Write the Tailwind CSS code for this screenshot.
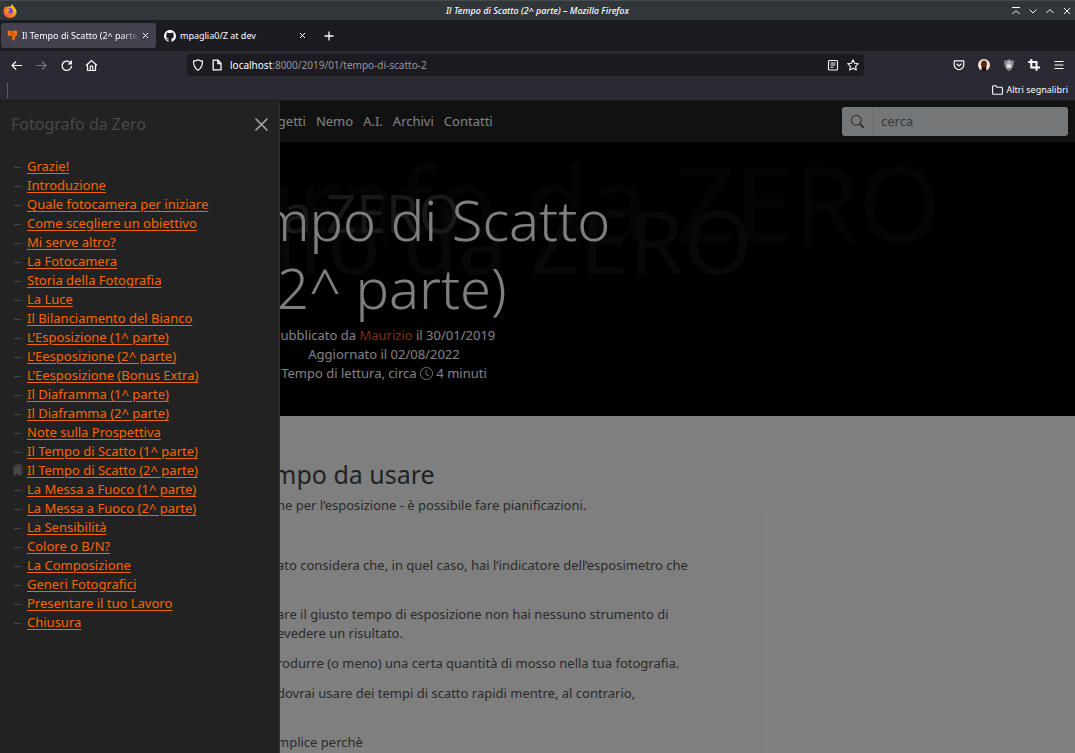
<!DOCTYPE html>
<html lang="it">
<head>
<meta charset="utf-8">
<title>Il Tempo di Scatto (2^ parte)</title>
<script src="https://cdn.jsdelivr.net/npm/@tailwindcss/browser@4"></script>
</head>
<body class="h-screen flex flex-col overflow-hidden bg-[#2b2a33] font-['Noto_Sans','Open_Sans',sans-serif] text-[13px] leading-[19px] text-[#fbfbfe]">

<!-- Window title bar -->
<header class="h-5 shrink-0 grid grid-cols-[80px_1fr_80px] items-center bg-[#30363a] border-t border-[#454a4e] text-[9px] px-[3px]">
  <svg class="size-[14px]" viewBox="0 0 16 16"><defs><linearGradient id="fx" x1="1" y1="0" x2="0" y2="1"><stop offset="0" stop-color="#fff44f"/><stop offset=".45" stop-color="#ff980e"/><stop offset="1" stop-color="#ff3750"/></linearGradient></defs><path fill="url(#fx)" d="M2.500 2.500 4 4l1-.8C6.500 2.500 8 3 8.500 3 9 2 9.500 1 10.500.3c.3 1.700 2.200 2.700 3.500 4.700 1 1.700 1.700 3 1.500 4.500C15 13.500 12 16 8 16S.5 13 .5 8.800C.5 6 1.500 4.500 2.500 2.500z"/><circle cx="8" cy="8" r="3.300" fill="#7542e5"/><path fill="#ff980e" d="M4 6c1.500-1 3-.5 4 .5 0 1-1.500 1-2 2s1 2 3 1.500c-2 2-5 1-5.500-1.500z"/></svg>
  <h1 class="text-center italic font-medium">Il Tempo di Scatto (2^ parte) – Mozilla Firefox</h1>
  <div class="flex justify-end gap-[7px]">
    <button aria-label="Sopra le altre"><svg class="size-[10px]" viewBox="0 0 10 10" fill="none" stroke="currentColor"><path d="M1 1.500h8M1.500 8 5 4.500 8.500 8"/></svg></button>
    <button aria-label="Minimizza"><svg class="size-[10px]" viewBox="0 0 10 10" fill="none" stroke="currentColor"><path d="M1.500 3.500 5 7l3.500-3.500"/></svg></button>
    <button aria-label="Massimizza"><svg class="size-[10px]" viewBox="0 0 10 10" fill="none" stroke="currentColor"><path d="M1.500 7 5 3.500 8.500 7"/></svg></button>
    <button aria-label="Chiudi finestra"><svg class="size-[10px]" viewBox="0 0 10 10" fill="none" stroke="currentColor"><path d="m2 2 6 6M8 2 2 8"/></svg></button>
  </div>
</header>

<!-- Tabs -->
<div class="h-[31px] shrink-0 flex items-center bg-[#1c1b22] text-[9px] pl-px">
  <div class="w-[155px] h-[25px] rounded-[3px] bg-[#42414d] flex items-center pl-1.5 pr-[7px]">
    <svg class="size-[11px] shrink-0" viewBox="0 0 11 11"><path fill="#ee7010" d="M.5 1 3 .5l2.500.8L8 .3l2.500.7L10 5.500 8.500 6 7 10.500l-2-.3L5.500 6 3 5.500 1 6z"/><path stroke="#8e431b" d="M4.500 1.500v3M7.500 3 6 5.500"/></svg>
    <span class="ml-1 flex-1 overflow-hidden whitespace-nowrap mask-r-from-85%">Il Tempo di Scatto (2^ parte)</span>
    <button class="ml-0.5" aria-label="Chiudi scheda"><svg class="size-[7px]" viewBox="0 0 7 7" stroke="currentColor"><path d="m1 1 5 5M6 1 1 6"/></svg></button>
  </div>
  <div class="w-[158px] flex items-center pl-2 pr-2">
    <svg class="size-3" viewBox="0 0 16 16" fill="currentColor"><path d="M8 0C3.580 0 0 3.580 0 8c0 3.540 2.290 6.530 5.470 7.590.4.070.55-.17.55-.38 0-.19-.01-.82-.01-1.490-2.010.37-2.530-.49-2.690-.94-.09-.23-.48-.94-.82-1.130-.28-.15-.68-.52-.01-.53.63-.01 1.080.58 1.230.82.72 1.210 1.870.87 2.330.66.07-.52.28-.87.51-1.070-1.780-.2-3.640-.89-3.640-3.950 0-.87.31-1.590.82-2.150-.08-.2-.36-1.020.08-2.120 0 0 .67-.21 2.200.82A7.600 7.600 0 0 1 8 3.860c.68 0 1.360.09 2 .27 1.530-1.040 2.200-.82 2.200-.82.44 1.100.16 1.920.08 2.120.51.56.82 1.270.82 2.150 0 3.070-1.870 3.750-3.650 3.950.29.25.54.73.54 1.480 0 1.070-.01 1.930-.01 2.200 0 .21.15.46.55.38A8 8 0 0 0 16 8c0-4.420-3.580-8-8-8z"/></svg>
    <span class="ml-1 flex-1">mpaglia0/Z at dev</span>
    <button aria-label="Chiudi scheda"><svg class="size-[7px]" viewBox="0 0 7 7" stroke="currentColor"><path d="m1 1 5 5M6 1 1 6"/></svg></button>
  </div>
  <button class="ml-2.5" aria-label="Nuova scheda"><svg class="size-[10px]" viewBox="0 0 10 10" stroke="currentColor" stroke-width="1.300"><path d="M5 .5v9M.5 5h9"/></svg></button>
</div>

<!-- Navigation toolbar -->
<div class="h-[28px] shrink-0 flex items-center text-[10px] pl-[10px] pr-2.5">
  <div class="w-[177px] flex gap-3">
    <button aria-label="Indietro"><svg class="size-[13px]" viewBox="0 0 13 13" fill="none" stroke="currentColor" stroke-width="1.200"><path d="M12 6.500H2M6 2.500l-4 4 4 4"/></svg></button>
    <button class="text-[#74737c]" aria-label="Avanti"><svg class="size-[13px]" viewBox="0 0 13 13" fill="none" stroke="currentColor" stroke-width="1.200"><path d="M1 6.500h10M7 2.500l4 4-4 4"/></svg></button>
    <button aria-label="Ricarica"><svg class="size-[13px]" viewBox="0 0 13 13" fill="none" stroke="currentColor" stroke-width="1.300"><path d="M11.500 7a4.700 4.700 0 1 1-1.500-3.700"/><path fill="currentColor" stroke="none" d="M12 1v4.500H7.500z"/></svg></button>
    <button aria-label="Home"><svg class="size-[13px]" viewBox="0 0 13 13" fill="none" stroke="currentColor" stroke-width="1.200"><path d="m1 6.500 5.500-5 5.500 5M2.500 5.500V11.500h8v-6M5.200 11.500V8.200a1.300 1.300 0 0 1 2.600 0v3.300"/></svg></button>
  </div>
  <div class="w-[677px] h-[22px] rounded-[3px] bg-[#1c1b22] flex items-center pl-[5px] pr-[5px]">
    <svg class="size-3" viewBox="0 0 12 12" fill="none" stroke="currentColor" stroke-width="1.200"><path d="M6 .8c1.500 1 3 1.200 4.500 1.300 0 4-.5 7-4.500 9.100C2 9.100 1.500 6 1.500 2.100 3 2 4.500 1.800 6 .8z"/></svg>
    <svg class="size-3 ml-[7px]" viewBox="0 0 12 12" fill="none" stroke="currentColor" stroke-width="1.300"><path d="M2.200 1.200H7l3 3v6.600H2.200zM6.800 1.200v3.300H10"/></svg>
    <a href="#" class="ml-[7px] flex-1 text-[#97969c]"><span class="text-[#fbfbfe]">localhost</span>:8000/2019/01/tempo-di-scatto-2</a>
    <svg class="size-3 mr-2" viewBox="0 0 12 12" fill="none" stroke="currentColor" stroke-width="1.100"><rect x="1.500" y="1.500" width="9" height="9.500" rx="1"/><path d="M3.500 4h5M3.500 6h5M3.500 8.200h3"/></svg>
    <svg class="size-3" viewBox="0 0 12 12" fill="none" stroke="currentColor" stroke-width="1.100" stroke-linejoin="round"><path d="m6 .8 1.600 3.400 3.700.5-2.700 2.600.7 3.700L6 9.200 2.700 11l.7-3.700L.7 4.700l3.700-.5z"/></svg>
  </div>
  <div class="ml-auto flex gap-[13px] items-center">
    <svg class="size-3" viewBox="0 0 12 12" fill="none" stroke="currentColor" stroke-width="1.200"><path d="M1.800 1.800h8.400q.6 0 .6.600V5.800a4.800 4.800 0 0 1-9.600 0V2.400q0-.6.600-.6zM3.600 4.800 6 7l2.400-2.200"/></svg>
    <svg class="size-3" viewBox="0 0 12 12"><circle cx="6" cy="6" r="6" fill="#f3e6d2"/><path fill="#57251c" d="M6 1.500c2.500 0 3.200 2 2.800 4.500L8 10l1 1.200A6 6 0 0 1 3 11l1-1.500L3 6C2.800 3 4 1.500 6 1.500z"/><path fill="#1d1012" d="M4 8h4l.5 3.400a6 6 0 0 1-5 0z"/></svg>
    <svg class="size-3" viewBox="0 0 12 12"><path fill="#85868a" d="M6 0c1.500 1 3.500 1.500 5 1.500C11 6 10 10 6 12 2 10 1 6 1 1.500 2.500 1.500 4.500 1 6 0z"/><path fill="#e4e4e4" d="M3.800 5.300h4.400v3.500H3.800z"/><path fill="none" stroke="#e4e4e4" d="M4.800 5.500V4a1.200 1.200 0 0 1 2.400 0v1.500"/></svg>
    <svg class="size-3" viewBox="0 0 12 12" fill="none" stroke="currentColor" stroke-width="2"><path d="M3.300 0v8.500H12M.2 3h8.300v8.800"/></svg>
    <button aria-label="Menu"><svg class="size-3" viewBox="0 0 12 12" stroke="currentColor" stroke-width="1.100"><path d="M1.500 2.500h9M1.500 6h9M1.500 9.500h9"/></svg></button>
  </div>
</div>

<!-- Bookmarks bar -->
<div class="h-[22px] shrink-0 flex items-center justify-between px-[7px] text-[9px] border-b border-[#1a1a1e]">
  <span class="w-px h-4 bg-[#5b5a63]"></span>
  <a href="#" class="flex items-center gap-1"><svg class="w-[11px] h-[10px]" viewBox="0 0 11 10" fill="none" stroke="currentColor" stroke-width="1.100"><path d="M.6 8.500V1.600q0-.8.800-.8h2.400L5 2.300h4.600q.8 0 .8.800v5.400q0 .8-.8.800H1.400q-.8 0-.8-.8z"/></svg>Altri segnalibri</a>
</div>

<!-- Page viewport -->
<div class="relative flex-1 min-h-0 overflow-hidden bg-white">
  <nav class="h-[41px] bg-[#222] flex items-center justify-between pl-[257px] pr-[7px] text-white">
    <div class="flex gap-2.5">
      <a href="#">Progetti</a><a href="#">Nemo</a><a href="#">A.I.</a><a href="#">Archivi</a><a href="#">Contatti</a>
    </div>
    <form class="w-[226px] h-[29px] flex rounded-[3px] overflow-hidden bg-[#e9ecef] text-[#444]">
      <label for="q" class="w-[31px] flex items-center justify-center border-r border-[#d6d8db]" aria-label="cerca"><svg class="size-[13px]" viewBox="0 0 16 16" fill="currentColor"><path d="M11.742 10.344a6.500 6.500 0 1 0-1.397 1.398l3.850 3.850a1 1 0 0 0 1.415-1.414zM12 6.500a5.500 5.500 0 1 1-11 0 5.500 5.500 0 0 1 11 0"/></svg></label>
      <input id="q" type="search" placeholder="cerca" class="min-w-0 flex-1 px-2 placeholder:text-[#6c757d]">
    </form>
  </nav>

  <section class="relative h-[274px] overflow-hidden bg-black text-white">
    <!-- Layered watermark of the site name -->
    <div aria-hidden="true" class="whitespace-nowrap">
      <span class="absolute left-[13px] top-0 text-[105px] leading-[120px] text-[#0b0b0b]">Fotografo da ZERO</span>
      <span class="absolute -left-[25px] top-[48px] text-[88px] leading-[100px] text-[#111]">Fotografo da ZERO</span>
      <span class="absolute -left-[8px] top-[41px] text-[53px] leading-[60px] text-[#303030]">Fotografo da ZERO</span>
    </div>
    <div class="relative w-[768px] pt-[43px] text-center">
      <h2 class="w-[500px] mx-auto text-[56px] leading-[68px] font-light">Il Tempo di Scatto (2^ parte)</h2>
      <p class="mt-[5px]">Pubblicato da <a href="#" class="text-[#f26000]">Maurizio</a> il 30/01/2019</p>
      <p>Aggiornato il 02/08/2022</p>
      <p>Tempo di lettura, circa <svg class="inline size-[13px] align-[-2px]" viewBox="0 0 16 16" fill="currentColor"><path d="M8 3.500a.5.5 0 0 0-1 0V9a.5.5 0 0 0 .252.434l3.500 2a.5.5 0 0 0 .496-.868L8 8.710z"/><path d="M8 16A8 8 0 1 0 8 0a8 8 0 0 0 0 16m7-8A7 7 0 1 1 1 8a7 7 0 0 1 14 0"/></svg> 4 minuti</p>
    </div>
  </section>

  <main class="pl-[277px] pt-[42px] text-[#555] whitespace-nowrap">
    <h3 class="-ml-1 mb-1.5 text-[25px] leading-[32px] text-[#444]">mpo da usare</h3>
    <p class="mb-[41px]">ne per l’esposizione - è possibile fare pianificazioni.</p>
    <p class="mb-[30px]">ato considera che, in quel caso, hai l’indicatore dell’esposimetro che</p>
    <p class="mb-[11px]">are il giusto tempo di esposizione non hai nessuno strumento di<br>evedere un risultato.</p>
    <p class="mb-[11px]">rodurre (o meno) una certa quantità di mosso nella tua fotografia.</p>
    <p class="mb-[30px]">dovrai usare dei tempi di scatto rapidi mentre, al contrario,</p>
    <p>mplice perchè</p>
  </main>

  <div class="absolute inset-0 bg-black/50"></div>

  <!-- Off-canvas index -->
  <aside class="absolute inset-y-0 left-0 w-[280px] bg-[#222] border-r border-[#303030] text-[#484848]">
    <div class="h-[46px] flex items-center justify-between px-[11px]">
      <h2 class="text-[16px]">Fotografo da Zero</h2>
      <button class="text-[#a6a6a6]" aria-label="Chiudi"><svg class="size-[13px]" viewBox="0 0 13 13" fill="none" stroke="currentColor" stroke-width="1.600" stroke-linecap="round"><path d="m1 1 11 11M12 1 1 12"/></svg></button>
    </div>
    <ul class="pt-[10px] pl-[27px] [&_a]:text-[#fa6400] [&_a]:underline [&_a]:underline-offset-2 [&>li]:relative [&>li]:before:absolute [&>li]:before:-left-[13px] [&>li]:before:top-[10px] [&>li]:before:h-px [&>li]:before:w-[7px] [&>li]:before:bg-[#444]">
      <li><a href="#">Grazie!</a></li>
      <li><a href="#">Introduzione</a></li>
      <li><a href="#">Quale fotocamera per iniziare</a></li>
      <li><a href="#">Come scegliere un obiettivo</a></li>
      <li><a href="#">Mi serve altro?</a></li>
      <li><a href="#">La Fotocamera</a></li>
      <li><a href="#">Storia della Fotografia</a></li>
      <li><a href="#">La Luce</a></li>
      <li><a href="#">Il Bilanciamento del Bianco</a></li>
      <li><a href="#">L’Esposizione (1^ parte)</a></li>
      <li><a href="#">L’Eesposizione (2^ parte)</a></li>
      <li><a href="#">L’Eesposizione (Bonus Extra)</a></li>
      <li><a href="#">Il Diaframma (1^ parte)</a></li>
      <li><a href="#">Il Diaframma (2^ parte)</a></li>
      <li><a href="#">Note sulla Prospettiva</a></li>
      <li><a href="#">Il Tempo di Scatto (1^ parte)</a></li>
      <li class="before:hidden"><svg class="absolute -left-[15px] top-[3px] size-3" viewBox="0 0 16 16" fill="#484848"><path d="M2 4a2 2 0 0 1 2-2h6a2 2 0 0 1 2 2v11.500a.5.5 0 0 1-.777.416L7 13.101l-4.223 2.815A.5.500 0 0 1 2 15.500z"/><path d="M4.268 1A2 2 0 0 1 6 0h6a2 2 0 0 1 2 2v11.500a.5.5 0 0 1-.777.416L13 13.768V2a1 1 0 0 0-1-1z"/></svg><a href="#">Il Tempo di Scatto (2^ parte)</a></li>
      <li><a href="#">La Messa a Fuoco (1^ parte)</a></li>
      <li><a href="#">La Messa a Fuoco (2^ parte)</a></li>
      <li><a href="#">La Sensibilità</a></li>
      <li><a href="#">Colore o B/N?</a></li>
      <li><a href="#">La Composizione</a></li>
      <li><a href="#">Generi Fotografici</a></li>
      <li><a href="#">Presentare il tuo Lavoro</a></li>
      <li><a href="#">Chiusura</a></li>
    </ul>
  </aside>
</div>
</body>
</html>
